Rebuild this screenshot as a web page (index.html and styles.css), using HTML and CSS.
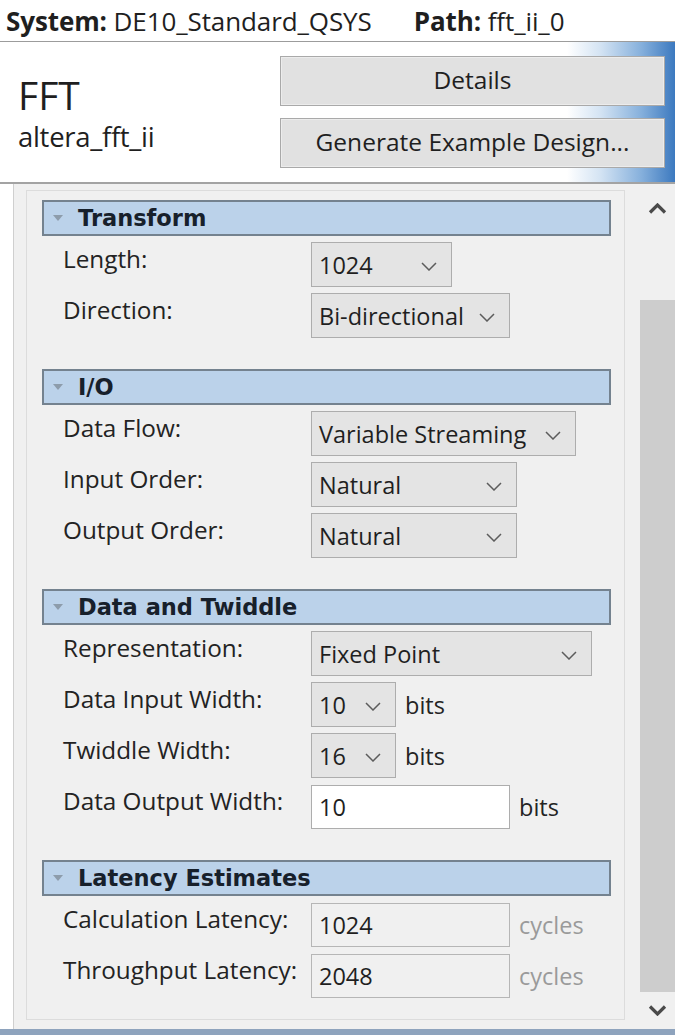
FILE: index.html
```html
<!DOCTYPE html>
<html lang="en">
<head>
<meta charset="utf-8">
<title>FFT parameters</title>
<link rel="stylesheet" href="styles.css">
</head>
<body>
<div class="window">
  <div class="crumb">
    <span class="crumb-item"><b>System:</b> DE10_Standard_QSYS</span>
    <span class="crumb-item"><b>Path:</b> fft_ii_0</span>
  </div>

  <div class="component">
    <div class="component-id">
      <div class="component-name">FFT</div>
      <div class="component-type">altera_fft_ii</div>
    </div>
    <div class="component-actions">
      <button class="btn">Details</button>
      <button class="btn">Generate Example Design...</button>
    </div>
  </div>

  <div class="params">
    <div class="viewport">
      <div class="panel">

        <section class="group">
          <div class="group-head"><span class="twisty"></span>Transform</div>
          <div class="rows">
            <div class="row">
              <span class="lbl">Length:</span>
              <div class="combo combo-length"><span>1024</span><svg class="chev" viewBox="0 0 16 9"><polyline points="1,1 8,8 15,1"/></svg></div>
            </div>
            <div class="row">
              <span class="lbl">Direction:</span>
              <div class="combo combo-direction"><span>Bi-directional</span><svg class="chev" viewBox="0 0 16 9"><polyline points="1,1 8,8 15,1"/></svg></div>
            </div>
          </div>
        </section>

        <section class="group">
          <div class="group-head"><span class="twisty"></span>I/O</div>
          <div class="rows">
            <div class="row">
              <span class="lbl">Data Flow:</span>
              <div class="combo combo-flow"><span>Variable Streaming</span><svg class="chev" viewBox="0 0 16 9"><polyline points="1,1 8,8 15,1"/></svg></div>
            </div>
            <div class="row">
              <span class="lbl">Input Order:</span>
              <div class="combo combo-order"><span>Natural</span><svg class="chev" viewBox="0 0 16 9"><polyline points="1,1 8,8 15,1"/></svg></div>
            </div>
            <div class="row">
              <span class="lbl">Output Order:</span>
              <div class="combo combo-order"><span>Natural</span><svg class="chev" viewBox="0 0 16 9"><polyline points="1,1 8,8 15,1"/></svg></div>
            </div>
          </div>
        </section>

        <section class="group">
          <div class="group-head"><span class="twisty"></span>Data and Twiddle</div>
          <div class="rows">
            <div class="row">
              <span class="lbl">Representation:</span>
              <div class="combo combo-repr"><span>Fixed Point</span><svg class="chev" viewBox="0 0 16 9"><polyline points="1,1 8,8 15,1"/></svg></div>
            </div>
            <div class="row">
              <span class="lbl">Data Input Width:</span>
              <div class="combo combo-bits"><span>10</span><svg class="chev" viewBox="0 0 16 9"><polyline points="1,1 8,8 15,1"/></svg></div>
              <span class="unit">bits</span>
            </div>
            <div class="row">
              <span class="lbl">Twiddle Width:</span>
              <div class="combo combo-bits"><span>16</span><svg class="chev" viewBox="0 0 16 9"><polyline points="1,1 8,8 15,1"/></svg></div>
              <span class="unit">bits</span>
            </div>
            <div class="row">
              <span class="lbl">Data Output Width:</span>
              <div class="field">10</div>
              <span class="unit">bits</span>
            </div>
          </div>
        </section>

        <section class="group">
          <div class="group-head"><span class="twisty"></span>Latency Estimates</div>
          <div class="rows">
            <div class="row">
              <span class="lbl">Calculation Latency:</span>
              <div class="field field-readonly">1024</div>
              <span class="unit unit-muted">cycles</span>
            </div>
            <div class="row">
              <span class="lbl">Throughput Latency:</span>
              <div class="field field-readonly">2048</div>
              <span class="unit unit-muted">cycles</span>
            </div>
          </div>
        </section>

      </div>
    </div>

    <div class="scrollbar">
      <div class="sb-btn sb-up"><svg class="sb-arrow" viewBox="0 0 19 11"><polyline points="2,9.5 9.5,2 17,9.5"/></svg></div>
      <div class="sb-track"><div class="sb-thumb"></div></div>
      <div class="sb-btn sb-down"><svg class="sb-arrow" viewBox="0 0 19 11"><polyline points="2,1.5 9.5,9 17,1.5"/></svg></div>
    </div>
  </div>

  <div class="bottom-edge"></div>
</div>
</body>
</html>
```

FILE: styles.css
```css
html, body {
  margin: 0;
  padding: 0;
}

body {
  width: 675px;
  height: 1035px;
  overflow: hidden;
  background: #ffffff;
  font-family: "Open Sans", "Noto Sans", sans-serif;
  font-size: 23.5px;
  color: #1f1f1f;
}

.window {
  display: flex;
  flex-direction: column;
  height: 1035px;
}

/* breadcrumb line at the very top */
.crumb {
  height: 41px;
  flex: none;
  display: flex;
  align-items: center;
  gap: 42px;
  padding-left: 6px;
  font-size: 26px;
  letter-spacing: -0.1px;
  white-space: nowrap;
  border-bottom: 1px solid #9c9c9c;
  box-shadow: 0 1px 0 #d8d8d8;
}

.crumb b {
  font-weight: 700;
}

/* component title block with its two action buttons */
.component {
  height: 142px;
  flex: none;
  box-sizing: border-box;
  display: flex;
  justify-content: space-between;
  padding: 0 10px 0 18px;
  border-bottom: 2px solid #a3a3a3;
  background: linear-gradient(90deg, #ffffff 0%, #ffffff 84%, #d3e3f3 89%, #86b0dc 95%, #3c79bf 100%);
}

.component-id {
  padding-top: 31px;
}

.component-name {
  font-size: 39px;
  line-height: 44px;
}

.component-type {
  margin-top: 4px;
  font-size: 27.5px;
  line-height: 32px;
  letter-spacing: -0.3px;
}

.component-actions {
  display: flex;
  flex-direction: column;
  gap: 12px;
  padding-top: 14px;
}

.btn {
  width: 385px;
  height: 50px;
  margin: 0;
  padding: 0 0 4px;
  box-sizing: border-box;
  font-family: inherit;
  font-size: 24.5px;
  color: #1f1f1f;
  background: #e1e1e1;
  border: 1px solid #a9a9a9;
  box-shadow: inset 0 0 0 1px #ececec;
}

/* scrollable parameter area */
.params {
  flex: 1;
  display: flex;
  margin-left: 13px;
  border-left: 1px solid #cfcfcf;
  background: #f0f0f0;
}

.viewport {
  flex: 1;
  display: flex;
  flex-direction: column;
  padding: 6px 15px 9px 12px;
}

.panel {
  flex: 1;
  border: 1px solid #dcdcdc;
  padding: 9px 13px 0 15px;
}

.group + .group {
  margin-top: 31px;
}

.group-head {
  height: 36px;
  box-sizing: border-box;
  display: flex;
  align-items: center;
  padding-left: 9px;
  border: 2px solid #74828f;
  background: #bbd2ea;
  font-family: "DejaVu Sans", sans-serif;
  font-weight: 700;
  font-size: 22.5px;
  color: #17202b;
}

.twisty {
  width: 0;
  height: 0;
  margin-right: 15px;
  border-left: 5px solid transparent;
  border-right: 5px solid transparent;
  border-top: 6px solid #8d9cab;
}

.rows {
  display: flex;
  flex-direction: column;
  gap: 6px;
  margin-top: 6px;
  padding-left: 21px;
}

.row {
  height: 45px;
  display: flex;
  align-items: center;
}

.lbl {
  width: 248px;
  flex: none;
  align-self: flex-start;
  padding-top: 2px;
  font-size: 24.3px;
  line-height: 30px;
  color: #232323;
  white-space: nowrap;
}

.combo {
  height: 45px;
  box-sizing: border-box;
  display: flex;
  align-items: center;
  justify-content: space-between;
  padding: 0 14px 0 7px;
  background: #e4e4e4;
  border: 1px solid #adadad;
  white-space: nowrap;
}

.combo-length { width: 141px; }
.combo-direction { width: 199px; }
.combo-flow { width: 265px; }
.combo-order { width: 206px; }
.combo-repr { width: 281px; }
.combo-bits { width: 85px; }

.chev {
  width: 16px;
  height: 9px;
  flex: none;
  margin-top: 4px;
}

.chev polyline {
  fill: none;
  stroke: #5c5c5c;
  stroke-width: 1.5;
}

.field {
  width: 199px;
  height: 44px;
  box-sizing: border-box;
  display: flex;
  align-items: center;
  padding-left: 7px;
  background: #ffffff;
  border: 1px solid #adadad;
}

.field-readonly {
  background: #f0f0f0;
  border-color: #b6b6b6;
}

.unit {
  margin-left: 9px;
  color: #232323;
}

.unit-muted {
  color: #9a9a9a;
}

/* vertical scrollbar */
.scrollbar {
  width: 35px;
  flex: none;
  display: flex;
  flex-direction: column;
  background: #f0f0f0;
}

.sb-btn {
  display: flex;
  align-items: center;
  justify-content: center;
}

.sb-up {
  height: 48px;
}

.sb-down {
  height: 37px;
}

.sb-arrow {
  width: 19px;
  height: 11px;
}

.sb-arrow polyline {
  fill: none;
  stroke: #4a4a4a;
  stroke-width: 3.2;
}

.sb-track {
  flex: 1;
  display: flex;
  flex-direction: column;
  padding-top: 68px;
}

.sb-thumb {
  flex: 1;
  background: #cdcdcd;
}

.bottom-edge {
  height: 6px;
  flex: none;
  background: #8ea3bd;
}
```
